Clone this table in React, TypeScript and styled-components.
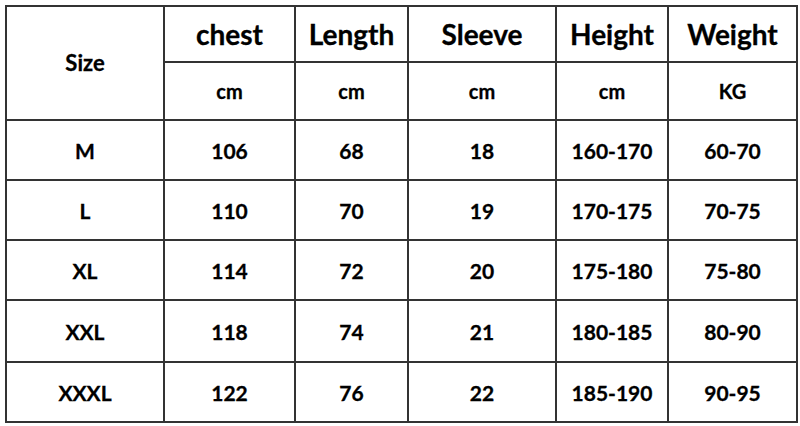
import styled, { createGlobalStyle } from 'styled-components';

const GlobalStyle = createGlobalStyle`
  html, body {
    margin: 0;
    padding: 0;
    background: #ffffff;
  }
  body {
    font-family: 'Lato', 'Open Sans', sans-serif;
    color: #000;
  }
`;

const Page = styled.div`
  padding: 5px 0 0 5px;
`;

const Table = styled.table`
  border-collapse: collapse;
  table-layout: fixed;
  width: 791px;
  border: 2px solid #333;
`;

const Cell = styled.td<{ $height: number; $size: number }>`
  border: 2px solid #333;
  height: ${(p) => p.$height}px;
  padding: 0;
  text-align: center;
  vertical-align: middle;
  font-weight: 700;
  font-size: ${(p) => p.$size}px;
  line-height: 1;
  -webkit-text-stroke: 0.3px #000;
`;

const colWidths = [158, 131, 113, 148, 112, 129];

const headers = ['chest', 'Length', 'Sleeve', 'Height', 'Weight'];
const units = ['cm', 'cm', 'cm', 'cm', 'KG'];

const rows = [
  ['M', '106', '68', '18', '160-170', '60-70'],
  ['L', '110', '70', '19', '170-175', '70-75'],
  ['XL', '114', '72', '20', '175-180', '75-80'],
  ['XXL', '118', '74', '21', '180-185', '80-90'],
  ['XXXL', '122', '76', '22', '185-190', '90-95'],
];

const rowHeights = [58, 58, 58, 60, 58];

export default function App() {
  return (
    <>
      <GlobalStyle />
      <Page>
        <Table>
          <colgroup>
            {colWidths.map((w, i) => (
              <col key={i} style={{ width: w }} />
            ))}
          </colgroup>
          <tbody>
            <tr>
              <Cell rowSpan={2} $height={54} $size={22}>
                Size
              </Cell>
              {headers.map((h) => (
                <Cell key={h} $height={54} $size={28}>
                  {h}
                </Cell>
              ))}
            </tr>
            <tr>
              <Cell $height={56} $size={20}>cm</Cell>
              <Cell $height={56} $size={20}>cm</Cell>
              <Cell $height={56} $size={20}>cm</Cell>
              <Cell $height={56} $size={20}>cm</Cell>
              <Cell $height={56} $size={20}>{units[4]}</Cell>
            </tr>
            {rows.map((r, ri) => (
              <tr key={r[0]}>
                {r.map((v, ci) => (
                  <Cell key={ci} $height={rowHeights[ri]} $size={21}>
                    {v}
                  </Cell>
                ))}
              </tr>
            ))}
          </tbody>
        </Table>
      </Page>
    </>
  );
}
